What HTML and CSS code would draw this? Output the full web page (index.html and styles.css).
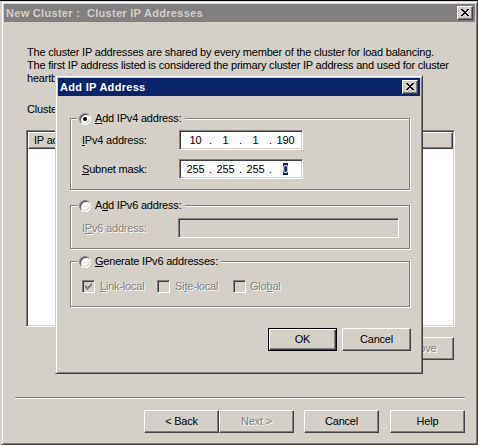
FILE: index.html
```html
<!DOCTYPE html>
<html lang="en">
<head>
    <meta charset="UTF-8">
    <meta name="viewport" content="width=device-width, initial-scale=1.0">
    <title>New Cluster : Cluster IP Addresses</title>
    <link rel="stylesheet" href="styles.css">
</head>
<body>
    <div class="window">
        <div class="titlebar inactive">
            <span class="title">New Cluster :&nbsp; Cluster IP Addresses</span>
            <span class="close-btn">
                <svg width="8" height="7" viewBox="0 0 8 7"><path d="M0 0h2v1h-2z M6 0h2v1h-2z M1 1h2v1h-2z M5 1h2v1h-2z M2 2h4v1h-4z M3 3h2v1h-2z M2 4h4v1h-4z M1 5h2v1h-2z M5 5h2v1h-2z M0 6h2v1h-2z M6 6h2v1h-2z" fill="#000"/></svg>
            </span>
        </div>
        <div class="wizard">
            <p class="intro">The cluster IP addresses are shared by every member of the cluster for load balancing.<br>The first IP address listed is considered the primary cluster IP address and used for cluster<br>heartbeats.</p>
            <div class="caption">Cluster IP addresses:</div>
            <div class="listbox">
                <!-- only the first column label shows past the dialog -->
                <div class="list-header">
                    <div class="col col-ip">IP address</div>
                    <div class="col col-mask"></div>
                </div>
            </div>
            <div class="list-buttons">
                <button class="btn" disabled>Remove</button>
            </div>
            <div class="separator"></div>
            <div class="nav-buttons">
                <button class="btn">&lt; Back</button>
                <button class="btn" disabled>Next &gt;</button>
                <button class="btn cancel">Cancel</button>
                <button class="btn help">Help</button>
            </div>
        </div>
    </div>

    <div class="dialog">
        <div class="titlebar active">
            <span class="title">Add IP Address</span>
            <span class="close-btn">
                <svg width="8" height="7" viewBox="0 0 8 7"><path d="M0 0h2v1h-2z M6 0h2v1h-2z M1 1h2v1h-2z M5 1h2v1h-2z M2 2h4v1h-4z M3 3h2v1h-2z M2 4h4v1h-4z M1 5h2v1h-2z M5 5h2v1h-2z M0 6h2v1h-2z M6 6h2v1h-2z" fill="#000"/></svg>
            </span>
        </div>
        <div class="dialog-body">
            <fieldset class="group group-v4">
                <legend><span class="radio checked"></span><span><u>A</u>dd IPv4 address:</span></legend>
                <div class="field-row">
                    <span class="field-label"><u>I</u>Pv4 address:</span>
                    <div class="ip-box">
                        <span class="octet">10</span><span class="dot">.</span><span class="octet">1</span><span class="dot">.</span><span class="octet">1</span><span class="dot">.</span><span class="octet">190</span>
                    </div>
                </div>
                <div class="field-row">
                    <span class="field-label"><u>S</u>ubnet mask:</span>
                    <div class="ip-box">
                        <span class="octet">255</span><span class="dot">.</span><span class="octet">255</span><span class="dot">.</span><span class="octet">255</span><span class="dot">.</span><span class="octet"><span class="selected">0</span></span>
                    </div>
                </div>
            </fieldset>

            <fieldset class="group group-v6">
                <legend><span class="radio"></span><span>A<u>d</u>d IPv6 address:</span></legend>
                <div class="field-row">
                    <span class="field-label disabled">I<u>P</u>v6 address:</span>
                    <div class="text-box wide"></div>
                </div>
            </fieldset>

            <fieldset class="group group-gen">
                <legend><span class="radio"></span><span><u>G</u>enerate IPv6 addresses:</span></legend>
                <div class="check-row">
                    <div class="check">
                        <span class="checkbox">
                            <svg width="7" height="7" viewBox="0 0 7 7"><path d="M0 2h1v3h-1z M1 3h1v3h-1z M2 4h1v3h-1z M3 3h1v3h-1z M4 2h1v3h-1z M5 1h1v3h-1z M6 0h1v3h-1z" fill="#808080"/></svg>
                        </span>
                        <span class="disabled"><u>L</u>ink-local</span>
                    </div>
                    <div class="check">
                        <span class="checkbox"></span>
                        <span class="disabled">Si<u>t</u>e-local</span>
                    </div>
                    <div class="check">
                        <span class="checkbox"></span>
                        <span class="disabled">Glo<u>b</u>al</span>
                    </div>
                </div>
            </fieldset>

            <div class="dialog-buttons">
                <button class="btn small default">OK</button>
                <button class="btn small">Cancel</button>
            </div>
        </div>
    </div>
</body>
</html>
```

FILE: styles.css
```css
html, body {
    height: 100%;
    margin: 0;
}

body {
    box-sizing: border-box;
    background: #d4d0c8;
    border-top: 1px solid #000;
    font-family: "Liberation Sans", Arial, sans-serif;
    font-size: 11px;
    line-height: 13px;
    letter-spacing: -0.2px;
    color: #000;
    overflow: hidden;
}

u {
    text-underline-offset: 1px;
}

/* classic raised window frame */
.window,
.dialog {
    box-sizing: border-box;
    background: #d4d0c8;
    border: 1px solid;
    border-color: #d4d0c8 #404040 #404040 #d4d0c8;
    box-shadow: inset 1px 1px #fff, inset -1px -1px #808080;
    padding: 2px;
    display: flex;
    flex-direction: column;
}

.window {
    width: 477px;
    height: 444px;
    margin-left: 1px;
}

.dialog {
    position: absolute;
    left: 55px;
    top: 75px;
    width: 368px;
    height: 299px;
}

.titlebar {
    height: 18px;
    flex-shrink: 0;
    display: flex;
    align-items: center;
    justify-content: space-between;
    padding: 0 2px;
    font-weight: bold;
    letter-spacing: 0.3px;
}

.titlebar.inactive {
    background: #808080;
    color: #d4d0c8;
}

.titlebar.active {
    background: #0a246a;
    color: #fff;
}

.close-btn {
    box-sizing: border-box;
    width: 16px;
    height: 14px;
    padding: 2px 0 0 3px;
    background: #d4d0c8;
    border: 1px solid;
    border-color: #fff #404040 #404040 #fff;
    box-shadow: inset -1px -1px #808080;
    line-height: 0;
}

/* wizard page */
.wizard {
    flex: 1;
    display: flex;
    flex-direction: column;
    padding: 24px 20px 0 22px;
}

.intro {
    margin: 0;
    padding-left: 1px;
}

.caption {
    margin-top: 18px;
    padding-left: 1px;
}

.listbox {
    box-sizing: border-box;
    height: 197px;
    margin-top: 14px;
    padding: 1px;
    background: #fff;
    border: 1px solid;
    border-color: #808080 #fff #fff #808080;
    box-shadow: inset 1px 1px #404040, inset -1px -1px #d4d0c8;
}

.list-header {
    display: flex;
    height: 17px;
}

.col {
    box-sizing: border-box;
    padding-left: 5px;
    line-height: 15px;
    background: #d4d0c8;
    border: 1px solid;
    border-color: #fff #404040 #404040 #fff;
    box-shadow: inset -1px -1px #808080;
}

.col-ip {
    width: 150px;
}

.col-mask {
    flex: 1;
}

.list-buttons {
    display: flex;
    justify-content: flex-end;
    margin: 10px 1px 0 0;
}

.separator {
    margin: 37px -10px 0 -11px;
    border-top: 1px solid #808080;
    border-bottom: 1px solid #fff;
}

.nav-buttons {
    display: flex;
    justify-content: flex-end;
    margin: 11px -10px 0 0;
}

.nav-buttons .cancel {
    margin-left: 10px;
}

.nav-buttons .help {
    margin-left: 11px;
}

/* push buttons */
.btn {
    box-sizing: border-box;
    width: 75px;
    height: 23px;
    padding: 0;
    font: inherit;
    letter-spacing: inherit;
    color: #000;
    background: #d4d0c8;
    border: 1px solid;
    border-color: #fff #404040 #404040 #fff;
    box-shadow: inset -1px -1px #808080;
    border-radius: 0;
}

.btn:disabled {
    color: #808080;
    text-shadow: 1px 1px 0 #fff;
}

.btn.small {
    width: 69px;
}

.btn.default {
    border-color: #000;
    box-shadow: inset 1px 1px #fff, inset -1px -1px #404040, inset -2px -2px #808080;
}

/* add ip dialog */
.dialog-body {
    flex: 1;
    padding: 16px 10px 0 12px;
}

.group {
    margin: 0;
    min-width: 0;
    border: 1px solid #808080;
    box-shadow: inset 1px 1px #fff, 1px 1px #fff;
    padding: 5px 10px 10px 11px;
}

.group legend {
    display: flex;
    align-items: center;
    gap: 4px;
    height: 13px;
    margin-left: -5px;
    padding: 0 3px 0 2px;
    background: #d4d0c8;
}

.group-v6 {
    margin-top: 9px;
    padding-top: 6px;
}

.group-gen {
    margin-top: 6px;
    padding: 12px 10px 13px 11px;
}

.radio {
    box-sizing: border-box;
    position: relative;
    width: 12px;
    height: 12px;
    border-radius: 50%;
    background: #fff;
    border: 1px solid;
    border-color: #808080 #fff #fff #808080;
    box-shadow: inset 1px 1px #404040, inset -1px -1px #d4d0c8;
}

.radio.checked::after {
    content: "";
    position: absolute;
    left: 3px;
    top: 3px;
    width: 4px;
    height: 4px;
    border-radius: 50%;
    background: #000;
}

.field-row {
    display: flex;
    align-items: center;
    height: 20px;
}

.field-row + .field-row {
    margin-top: 9px;
}

.field-label {
    width: 97px;
}

.disabled {
    color: #808080;
    text-shadow: 1px 1px 0 #fff;
}

.ip-box,
.text-box {
    box-sizing: border-box;
    height: 20px;
    background: #fff;
    border: 1px solid;
    border-color: #808080 #fff #fff #808080;
    box-shadow: inset 1px 1px #404040, inset -1px -1px #d4d0c8;
}

.ip-box {
    width: 124px;
    display: flex;
    align-items: center;
    gap: 1px;
    padding-left: 4px;
}

.octet {
    width: 23px;
    text-align: center;
}

.dot {
    width: 5px;
    text-align: center;
}

.selected {
    background: #0a246a;
    color: #fff;
}

.text-box.wide {
    width: 221px;
    margin-left: -1px;
    background: #d4d0c8;
}

.check-row {
    display: grid;
    grid-template-columns: 75px 76px auto;
}

.check {
    display: flex;
    align-items: center;
    gap: 5px;
}

.check:last-child {
    gap: 4px;
}

.checkbox {
    box-sizing: border-box;
    width: 13px;
    height: 13px;
    padding: 2px 0 0 2px;
    background: #d4d0c8;
    border: 1px solid;
    border-color: #808080 #fff #fff #808080;
    box-shadow: inset 1px 1px #404040, inset -1px -1px #d4d0c8;
    line-height: 0;
}

.dialog-buttons {
    display: flex;
    justify-content: flex-end;
    gap: 5px;
    margin: 21px -1px 0 0;
}
```
